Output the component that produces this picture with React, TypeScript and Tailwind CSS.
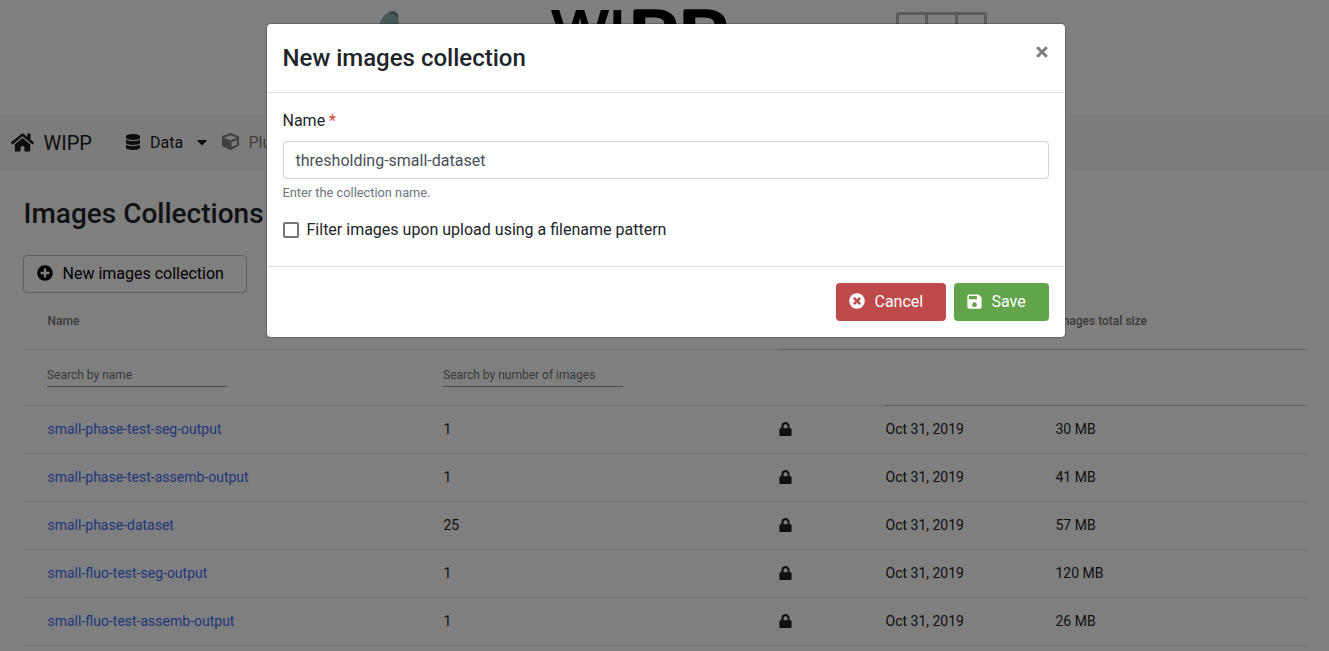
import React from "react";
import {
  FaHome,
  FaDatabase,
  FaCube,
  FaPlusCircle,
  FaTimesCircle,
  FaLock,
  FaCaretDown,
} from "react-icons/fa";
import { MdSave } from "react-icons/md";

type Row = { name: string; images: number; date: string; size: string };

const rows: Row[] = [
  { name: "small-phase-test-seg-output", images: 1, date: "Oct 31, 2019", size: "30 MB" },
  { name: "small-phase-test-assemb-output", images: 1, date: "Oct 31, 2019", size: "41 MB" },
  { name: "small-phase-dataset", images: 25, date: "Oct 31, 2019", size: "57 MB" },
  { name: "small-fluo-test-seg-output", images: 1, date: "Oct 31, 2019", size: "120 MB" },
  { name: "small-fluo-test-assemb-output", images: 1, date: "Oct 31, 2019", size: "26 MB" },
];

const grid = "grid grid-cols-[420px_336px_106px_170px_252px]";

function Banner() {
  return (
    <header className="h-[115px] shrink-0">
      <svg width="1329" height="115" viewBox="0 0 1329 115">
        <path d="M379 24C382 19 384 14 388 13C392 10 397 11 398 15L399 24L399 60H379Z" fill="#8ab5b0" />
        <path d="M388 13C392 10 397 11 398 15L398 19C396 15 393 13 388 13Z" fill="#648e8a" />
        <g fontFamily="Inter" fill="#000">
          <text y="46" x="458 507.5" transform="scale(1.2 1)" fontWeight="600" fontSize="50">
            WI
          </text>
          <text
            y="53"
            x="466 503"
            transform="scale(1.35 1)"
            fontWeight="400"
            fontSize="57"
            stroke="#000"
            strokeWidth="3.5"
            strokeLinejoin="round"
          >
            PP
          </text>
        </g>
        <g fill="none" stroke="#b4b8b9" strokeWidth="3">
          <rect x="897.5" y="13.5" width="88" height="70" rx="1" />
          <path d="M926.5 13V83M956.5 13V83" />
        </g>
      </svg>
    </header>
  );
}

function Navbar() {
  return (
    <nav className="flex h-[56px] shrink-0 items-center border-b border-[#f8f8f8] bg-[#f8f8f8] pl-[11px] text-[#1a1a1a]">
      <FaHome className="size-[23px]" />
      <span className="ml-[9.5px] w-[81.5px] text-xl">WIPP</span>
      <FaDatabase className="size-4 translate-y-[-1px]" />
      <span className="ml-[9px] w-[44px]">Data</span>
      <FaCaretDown className="size-4 translate-y-[-1px]" />
      <span className="ml-[12px] flex items-center text-[#808080]">
        <FaCube className="size-[17px] translate-y-[-1px]" />
        <span className="ml-[9.5px]">Plugins</span>
      </span>
    </nav>
  );
}

function SearchField({ label }: { label: string }) {
  return (
    <div className="h-[24px] w-[180px] border-b border-[#949494] text-xs leading-[24px] text-[#757575]">
      {label}
    </div>
  );
}

function CollectionsTable() {
  return (
    <div className="text-sm text-[#212121]">
      <div className={`${grid} h-[57px] text-xs font-medium text-[#757575]`}>
        <div className="border-b border-[#e0e0e0] pl-[24.5px] leading-[56px]">Name</div>
        <div className="border-b border-[#e0e0e0] leading-[56px]">Number of images</div>
        <div className="border-b border-[#c0c0c0] leading-[56px]">Locked</div>
        <div className="border-b border-[#c0c0c0] leading-[56px]">Creation date</div>
        <div className="border-b border-[#c0c0c0] pl-[0.5px] leading-[56px]">Images total size</div>
      </div>
      <div className={`${grid} h-[56px]`}>
        <div className="border-b border-[#e0e0e0] pt-[13px] pl-6">
          <SearchField label="Search by name" />
        </div>
        <div className="border-b border-[#e0e0e0] pt-[13px]">
          <SearchField label="Search by number of images" />
        </div>
        <div className="border-b border-[#e0e0e0]" />
        <div className="border-b border-[#c0c0c0]" />
        <div className="border-b border-[#c0c0c0]" />
      </div>
      {rows.map((row) => (
        <div key={row.name} className={`${grid} h-12 items-center border-b border-[#e0e0e0] pb-[2px]`}>
          <a className="pl-[24.5px] text-[#3c6df5]">{row.name}</a>
          <span className="pl-[0.5px]">{row.images}</span>
          <FaLock className="h-[14px] w-[13px]" />
          <span className="pl-[0.5px]">{row.date}</span>
          <span className="pl-[0.5px]">{row.size}</span>
        </div>
      ))}
    </div>
  );
}

function Modal() {
  return (
    <div className="absolute top-[23px] left-[266px] w-[800px] rounded-[5px] border border-black/20 bg-white bg-clip-padding text-[#212529]">
      <div className="flex h-[69px] justify-between border-b border-[#dee2e6] pr-[17px] pl-[15.5px]">
        <h4 className="pt-4 text-2xl leading-9 font-medium">New images collection</h4>
        <svg className="mt-[22px]" width="12" height="12" viewBox="0 0 12 12">
          <path d="M1.2 1.2L10.8 10.8M10.8 1.2L1.2 10.8" stroke="#7f7f7f" strokeWidth="3" />
        </svg>
      </div>
      <div className="h-[174px] border-b border-[#dee2e6] px-4 pt-4">
        <label className="ml-[-0.5px] block h-8 leading-6">
          Name <span className="text-[#d9432f]">*</span>
        </label>
        <div className="h-[38px] rounded-[4px] border border-[#ced4da] pt-px pl-[11.5px] leading-9 text-[#495057]">
          thresholding-small-dataset
        </div>
        <p className="mt-1 ml-[-0.5px] text-[12.8px] leading-5 text-[#6c757d]">Enter the collection name.</p>
        <div className="mt-[15px] flex h-6 items-center">
          <span className="size-4 rounded-[2px] border-2 border-[#757575]" />
          <span className="ml-[7.5px]">Filter images upon upload using a filename pattern</span>
        </div>
      </div>
      <div className="flex h-[70px] justify-end gap-2 px-4 pt-4 text-white">
        <button className="flex h-[38px] w-[110px] items-center rounded-[4px] bg-[#bf4a4a] pl-[12.5px]">
          <FaTimesCircle className="size-4 translate-y-[-1px]" />
          <span className="ml-[10px]">Cancel</span>
        </button>
        <button className="flex h-[38px] w-[95px] items-center rounded-[4px] bg-[#62a44c] pl-[11px]">
          <MdSave className="size-[19px] translate-y-[-1px]" />
          <span className="ml-[7.5px]">Save</span>
        </button>
      </div>
    </div>
  );
}

export default function App() {
  return (
    <div className="relative flex h-[651px] w-[1329px] flex-col overflow-hidden bg-white font-[Roboto,sans-serif] text-base">
      <Banner />
      <Navbar />
      <main className="w-[1307px] pl-[23px]">
        <h2 className="pt-[22px] pl-[0.5px] text-[28px] leading-[42px] font-medium text-[#212529]">Images Collections</h2>
        <button className="mt-[20px] flex h-[38px] w-[224px] items-center rounded-[4px] border border-[#bdbdbd] pl-[12.5px] text-black">
          <FaPlusCircle className="size-4 translate-y-[-1px]" />
          <span className="ml-[10px]">New images collection</span>
        </button>
        <CollectionsTable />
      </main>
      <div className="absolute inset-0 bg-black/50" />
      <Modal />
    </div>
  );
}
